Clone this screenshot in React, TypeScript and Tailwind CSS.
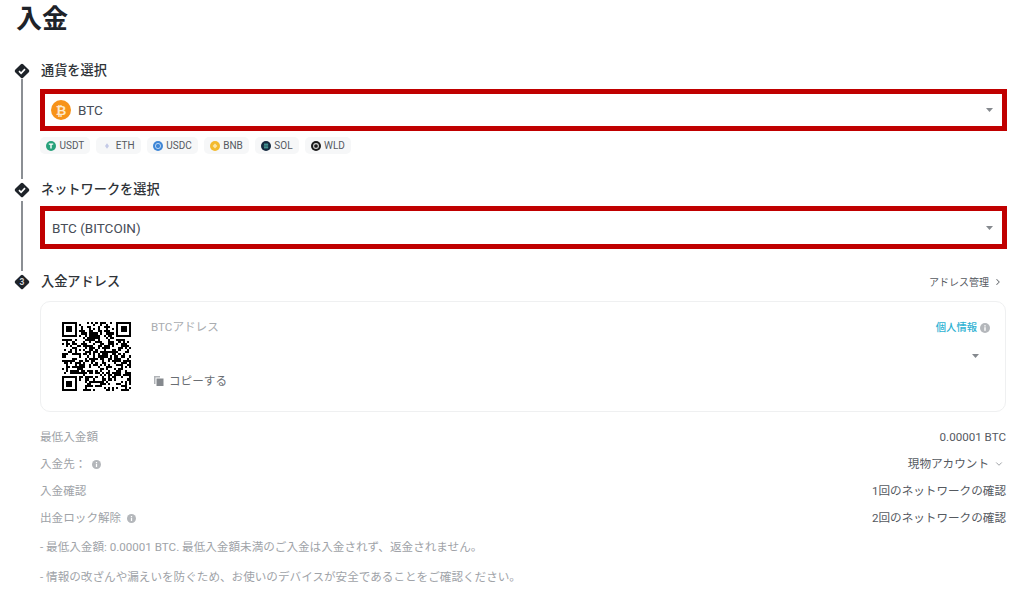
import { ChevronDown, ChevronRight } from 'lucide-react';

// Small coin icons in the quick-pick chips
const CoinIcon = ({ name }: { name: string }) => {
  if (name === 'USDT')
    return (
      <svg viewBox="0 0 10 10" className="h-[10px] w-[10px]">
        <circle cx="5" cy="5" r="5" fill="#26a17b" />
        <path d="M2.8 2.6h4.4v1.2H5.7v3.8H4.3V3.8H2.8z" fill="#fff" />
      </svg>
    );
  if (name === 'ETH')
    return (
      <svg viewBox="0 0 10 10" className="h-[10px] w-[10px]">
        <path d="M5 2.2L7 5 5 7.8 3 5z" fill="#c3c9e6" />
      </svg>
    );
  if (name === 'USDC')
    return (
      <svg viewBox="0 0 10 10" className="h-[10px] w-[10px]">
        <circle cx="5" cy="5" r="5" fill="#3e86d6" />
        <circle cx="5" cy="5" r="2.6" fill="none" stroke="#b9d4f2" strokeWidth="1" />
      </svg>
    );
  if (name === 'BNB')
    return (
      <svg viewBox="0 0 10 10" className="h-[10px] w-[10px]">
        <circle cx="5" cy="5" r="5" fill="#f3ba2f" />
        <path d="M5 2.6L7.4 5 5 7.4 2.6 5z" fill="#fbe5a8" />
      </svg>
    );
  if (name === 'SOL')
    return (
      <svg viewBox="0 0 10 10" className="h-[10px] w-[10px]">
        <circle cx="5" cy="5" r="5" fill="#14293f" />
        <path d="M3 3.2h4.2M2.8 5h4.4M3 6.8h4.2" stroke="#5ed3c4" strokeWidth="0.9" />
      </svg>
    );
  return (
    <svg viewBox="0 0 10 10" className="h-[10px] w-[10px]">
      <circle cx="5" cy="5" r="5" fill="#1a1a1a" />
      <circle cx="5" cy="5" r="2.4" fill="none" stroke="#d5d5d5" strokeWidth="1.1" />
    </svg>
  );
};

const COINS = ['USDT', 'ETH', 'USDC', 'BNB', 'SOL', 'WLD'];

// Pseudo QR pattern, 33 modules with three finder squares
const QR_SIZE = 33;

const inFinder = (x: number, y: number) =>
  (x < 8 && y < 8) || (x >= QR_SIZE - 8 && y < 8) || (x < 8 && y >= QR_SIZE - 8);

const qrCells = () => {
  const cells: { x: number; y: number }[] = [];
  let seed = 77;
  for (let y = 0; y < QR_SIZE; y++) {
    for (let x = 0; x < QR_SIZE; x++) {
      seed = (seed * 1103515245 + 12345) & 0x7fffffff;
      if (!inFinder(x, y) && (seed >> 16) % 100 < 52) cells.push({ x, y });
    }
  }
  return cells;
};

const Finder = ({ x, y }: { x: number; y: number }) => (
  <g>
    <path
      fillRule="evenodd"
      d={`M${x} ${y}h7v7h-7zM${x + 1} ${y + 1}v5h5v-5z`}
      fill="#000"
    />
    <rect x={x + 2} y={y + 2} width="3" height="3" fill="#000" />
  </g>
);

const QrCode = () => (
  <svg
    viewBox={`0 0 ${QR_SIZE} ${QR_SIZE}`}
    className="h-[69px] w-[69px] shrink-0"
    shapeRendering="crispEdges"
  >
    {qrCells().map((c) => (
      <rect key={`${c.x}-${c.y}`} x={c.x} y={c.y} width="1" height="1" fill="#000" />
    ))}
    <Finder x={0} y={0} />
    <Finder x={QR_SIZE - 7} y={0} />
    <Finder x={0} y={QR_SIZE - 7} />
  </svg>
);

// Diamond shaped step marker, with a check or a number
const StepMark = ({ num }: { num?: string }) => (
  <svg viewBox="0 0 16 16" className="h-4 w-4 shrink-0">
    <rect x="2.4" y="2.4" width="11.2" height="11.2" rx="1.6" transform="rotate(45 8 8)" fill="#1e2329" />
    {num ? (
      <text x="8" y="11" textAnchor="middle" fontSize="8.5" fontWeight="700" fill="#d5d7da">
        {num}
      </text>
    ) : (
      <path d="M5 8.2l2.1 2.1L11 6.2" fill="none" stroke="#fff" strokeWidth="1.7" />
    )}
  </svg>
);

const InfoDot = ({ size = 'h-[9px] w-[9px]' }: { size?: string }) => (
  <svg viewBox="0 0 10 10" className={size}>
    <circle cx="5" cy="5" r="5" fill="#b4b7bb" />
    <rect x="4.3" y="4.2" width="1.4" height="3.6" fill="#fff" />
    <rect x="4.3" y="2.2" width="1.4" height="1.3" fill="#fff" />
  </svg>
);

const Caret = () => (
  <svg viewBox="0 0 7 4" className="h-[4px] w-[7px]">
    <path d="M0 0h7L3.5 4z" fill="#85898e" />
  </svg>
);

const BitcoinIcon = () => (
  <span className="flex h-5 w-5 items-center justify-center rounded-full bg-[#f7931a] text-[13px] leading-none font-bold text-[#fde9cc]">
    ₿
  </span>
);

const InfoRow = ({ label, children }: { label: React.ReactNode; children: React.ReactNode }) => (
  <div className="flex h-[27px] items-center justify-between text-[11.6px]">
    <div className="flex items-center gap-[6px] text-[#a0a3a8]">{label}</div>
    <div className="flex items-center text-[#55595f]">{children}</div>
  </div>
);

export default function App() {
  return (
    <div
      className="h-[592px] w-[1024px] overflow-hidden bg-white pr-[17px] pl-[14px] text-[#1e2329]"
      style={{ fontFamily: 'Roboto, "Noto Sans CJK JP", sans-serif' }}
    >
      <h1 className="ml-[2px] flex h-[38px] items-center text-[26px] leading-none font-bold">入金</h1>

      {/* Step 1 */}
      <div className="mt-[24px] flex h-[17px] items-center gap-[11px]">
        <StepMark />
        <span className="text-[13.2px] font-medium text-[#2f3338]">通貨を選択</span>
      </div>
      <div className="ml-[7px] flex h-[100px] flex-col border-l-2 border-[#8b8f94] pl-[17px]">
        <div className="mt-[10px] flex h-[42px] items-center justify-between border-[5px] border-[#c00000] pr-[9px] pl-[6px]">
          <div className="flex items-center gap-[7px]">
            <BitcoinIcon />
            <span className="text-[13.5px] text-[#474d57]">BTC</span>
          </div>
          <Caret />
        </div>
        <div className="mt-[6px] flex gap-[6px]">
          {COINS.map((coin) => (
            <div
              key={coin}
              className="flex h-[17px] items-center gap-[3.5px] rounded-[5px] bg-[#f6f7f8] px-[6px] text-[10px] text-[#55595f]"
            >
              <CoinIcon name={coin} />
              {coin}
            </div>
          ))}
        </div>
      </div>

      {/* Step 2 */}
      <div className="flex h-[22px] items-center gap-[11px]">
        <StepMark />
        <span className="text-[13.2px] font-medium text-[#2f3338]">ネットワークを選択</span>
      </div>
      <div className="ml-[7px] flex h-[70px] flex-col border-l-2 border-[#8b8f94] pl-[17px]">
        <div className="mt-[5px] flex h-[43px] items-center justify-between border-[5px] border-[#c00000] pt-[1px] pr-[9px] pl-[7px]">
          <span className="text-[13.5px] text-[#474d57]">BTC (BITCOIN)</span>
          <Caret />
        </div>
      </div>

      {/* Step 3 */}
      <div className="mt-[1px] flex h-[20px] items-center gap-[11px]">
        <StepMark num="3" />
        <span className="text-[13.2px] font-medium text-[#2f3338]">入金アドレス</span>
        <div className="ml-auto mr-[4px] flex items-center gap-[4px] text-[10px] text-[#55595f]">
          アドレス管理
          <ChevronRight size={10} strokeWidth={2.5} className="text-[#6a6e73]" />
        </div>
      </div>

      <div className="mt-[9px] mr-[1px] ml-[26px] flex h-[111px] rounded-[10px] border border-[#eff0f1] pt-[20px] pr-[15px] pl-[21px]">
        <QrCode />
        <div className="ml-[20px] flex h-[68px] flex-col justify-between text-[11.6px]">
          <span className="mt-[-3px] text-[#a9acb0]">BTCアドレス</span>
          <div className="ml-[3px] flex items-center gap-[5px] text-[#6a6e73]">
            <svg viewBox="0 0 10 10" className="h-[10px] w-[10px]">
              <path d="M0 0h6v1.5H1.5V8H0z" fill="#b0b3b7" />
              <rect x="2.5" y="2.5" width="7" height="7.5" fill="#85898e" />
            </svg>
            コピーする
          </div>
        </div>
        <div className="ml-auto flex flex-col items-end gap-[19px]">
          <div className="mt-[-2px] flex items-center gap-[3px] text-[10.3px] font-medium text-[#2eb2d3]">
            個人情報
            <InfoDot size="h-[10px] w-[10px]" />
          </div>
          <div className="mr-[11px] flex">
            <Caret />
          </div>
        </div>
      </div>

      {/* Details */}
      <div className="mt-[12px] mr-[1px] ml-[26px]">
        <InfoRow label="最低入金額">0.00001 BTC</InfoRow>
        <InfoRow
          label={
            <>
              入金先： <InfoDot />
            </>
          }
        >
          現物アカウント
          <ChevronDown size={10} className="mr-[2px] ml-[5px] text-[#8b8f94]" />
        </InfoRow>
        <InfoRow label="入金確認">1回のネットワークの確認</InfoRow>
        <InfoRow
          label={
            <>
              出金ロック解除 <InfoDot />
            </>
          }
        >
          2回のネットワークの確認
        </InfoRow>
        <p className="mt-[7px] text-[11.6px] leading-[16px] text-[#a0a3a8]">
          - 最低入金額: 0.00001 BTC. 最低入金額未満のご入金は入金されず、返金されません。
        </p>
        <p className="mt-[14px] text-[11.6px] leading-[16px] text-[#a0a3a8]">
          - 情報の改ざんや漏えいを防ぐため、お使いのデバイスが安全であることをご確認ください。
        </p>
      </div>
    </div>
  );
}
